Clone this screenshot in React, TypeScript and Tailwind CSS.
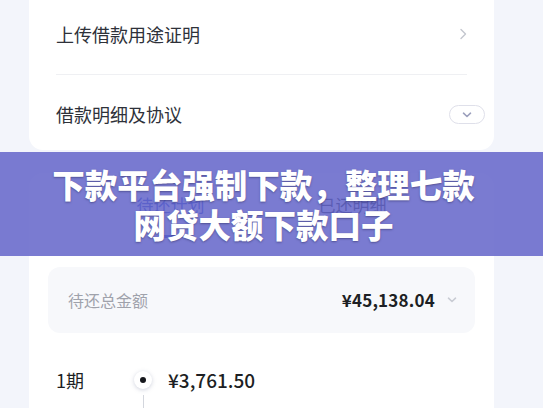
import React from "react";

const cjk = "font-['Noto_Sans_CJK_SC','Noto_Sans',sans-serif]";

const ChevronRight = () => (
  <svg width="8" height="12" viewBox="0 0 8 12" fill="none">
    <path d="M2 1.5 6.5 6 2 10.5" stroke="#c3c6ce" strokeWidth="1.4" strokeLinecap="round" strokeLinejoin="round" />
  </svg>
);

const ChevronDown = ({ color = "#9ca0bd", w = 10 }: { color?: string; w?: number }) => (
  <svg width={w} height={w * 0.6} viewBox="0 0 10 6" fill="none">
    <path d="M1.5 1.2 5 4.5l3.5-3.3" stroke={color} strokeWidth="1.6" strokeLinecap="round" strokeLinejoin="round" />
  </svg>
);

const Tab = ({ label, active }: { label: string; active?: boolean }) => (
  <div className="flex w-[182px] flex-col items-center pt-[20px]">
    <span className={`text-[17px] leading-[24px] ${active ? "text-[#2f4fd0]" : "text-[#2f333d]"}`}>{label}</span>
    <div className={`mt-[18px] h-[3px] w-[26px] rounded-full ${active ? "bg-[#2f4fd0]" : "bg-transparent"}`} />
  </div>
);

export default function App() {
  return (
    <div className={`relative h-[408px] w-[543px] overflow-hidden bg-[#f3f5fb] ${cjk}`}>
      <div className="pl-[29px] pr-[49px]">
        {/* loan info card */}
        <div className="h-[150px] rounded-b-[14px] bg-white px-[27px]">
          <div className="flex h-[74px] items-center justify-between pb-[6px]">
            <span className="text-[18px] text-[#2e3139]">上传借款用途证明</span>
            <ChevronRight />
          </div>
          <div className="h-px bg-[#eff0f3]" />
          <div className="flex h-[75px] items-center justify-between pt-[4px]">
            <span className="text-[18px] text-[#2e3139]">借款明细及协议</span>
            <div className="-mr-[18px] flex h-[19px] w-[36px] items-center justify-center rounded-full border border-[#dfe0ea]">
              <ChevronDown />
            </div>
          </div>
        </div>

        {/* repayment card */}
        <div className="mt-[23px] rounded-t-[14px] bg-white px-[19px]">
          <div className="flex justify-center">
            <Tab label="待还计划" active />
            <Tab label="已还明细" />
          </div>
          <div className="mt-[29px] flex h-[66px] items-center justify-between rounded-[12px] bg-[#f7f8fb] pl-[20px] pr-[18px]">
            <span className="text-[16px] text-[#9fa2ab]">待还总金额</span>
            <div className="flex items-center gap-[12px]">
              <span className="text-[17px] font-semibold tracking-[0.2px] text-[#1d1f24]">¥45,138.04</span>
              <ChevronDown color="#c9ccd4" w={10} />
            </div>
          </div>
          <div className="mt-[34px] flex h-[26px] items-center pl-[8px]">
            <span className="w-[74px] text-[18px] text-[#1d1f24]">1期</span>
            <div className="flex w-[26px] justify-center">
              <div className="flex h-[18px] w-[18px] items-center justify-center rounded-full bg-white shadow-[0_1px_4px_rgba(120,130,160,0.35)]">
                <div className="h-[6px] w-[6px] rounded-full bg-[#15171c]" />
              </div>
            </div>
            <span className="ml-[12px] text-[19px] font-medium text-[#1d1f24]">¥3,761.50</span>
          </div>
          <div className="flex pl-[8px] pt-[2px]">
            <span className="w-[74px] pt-[10px] text-[13px] text-[#a3a6ae]">04/10/23</span>
            <div className="flex w-[26px] justify-center">
              <div className="h-[30px] w-px bg-[#d3d6dd]" />
            </div>
            <div className="ml-[12px] flex gap-[90px] pt-[10px] text-[13px] text-[#a3a6ae]">
              <span>本金</span>
              <span>利息</span>
            </div>
          </div>
        </div>
      </div>

      {/* title banner */}
      <div className="absolute left-0 right-0 top-[152px] flex h-[104px] flex-col items-center justify-center bg-[#6364c9]/85 pr-[16px]">
        <p className="text-[32.5px] font-black leading-[40px] text-white [text-shadow:0_1px_2px_rgba(40,40,90,0.5)]">
          下款平台强制下款，整理七款
        </p>
        <p className="text-[32.5px] font-black leading-[40px] text-white [text-shadow:0_1px_2px_rgba(40,40,90,0.5)]">
          网贷大额下款口子
        </p>
      </div>
    </div>
  );
}
